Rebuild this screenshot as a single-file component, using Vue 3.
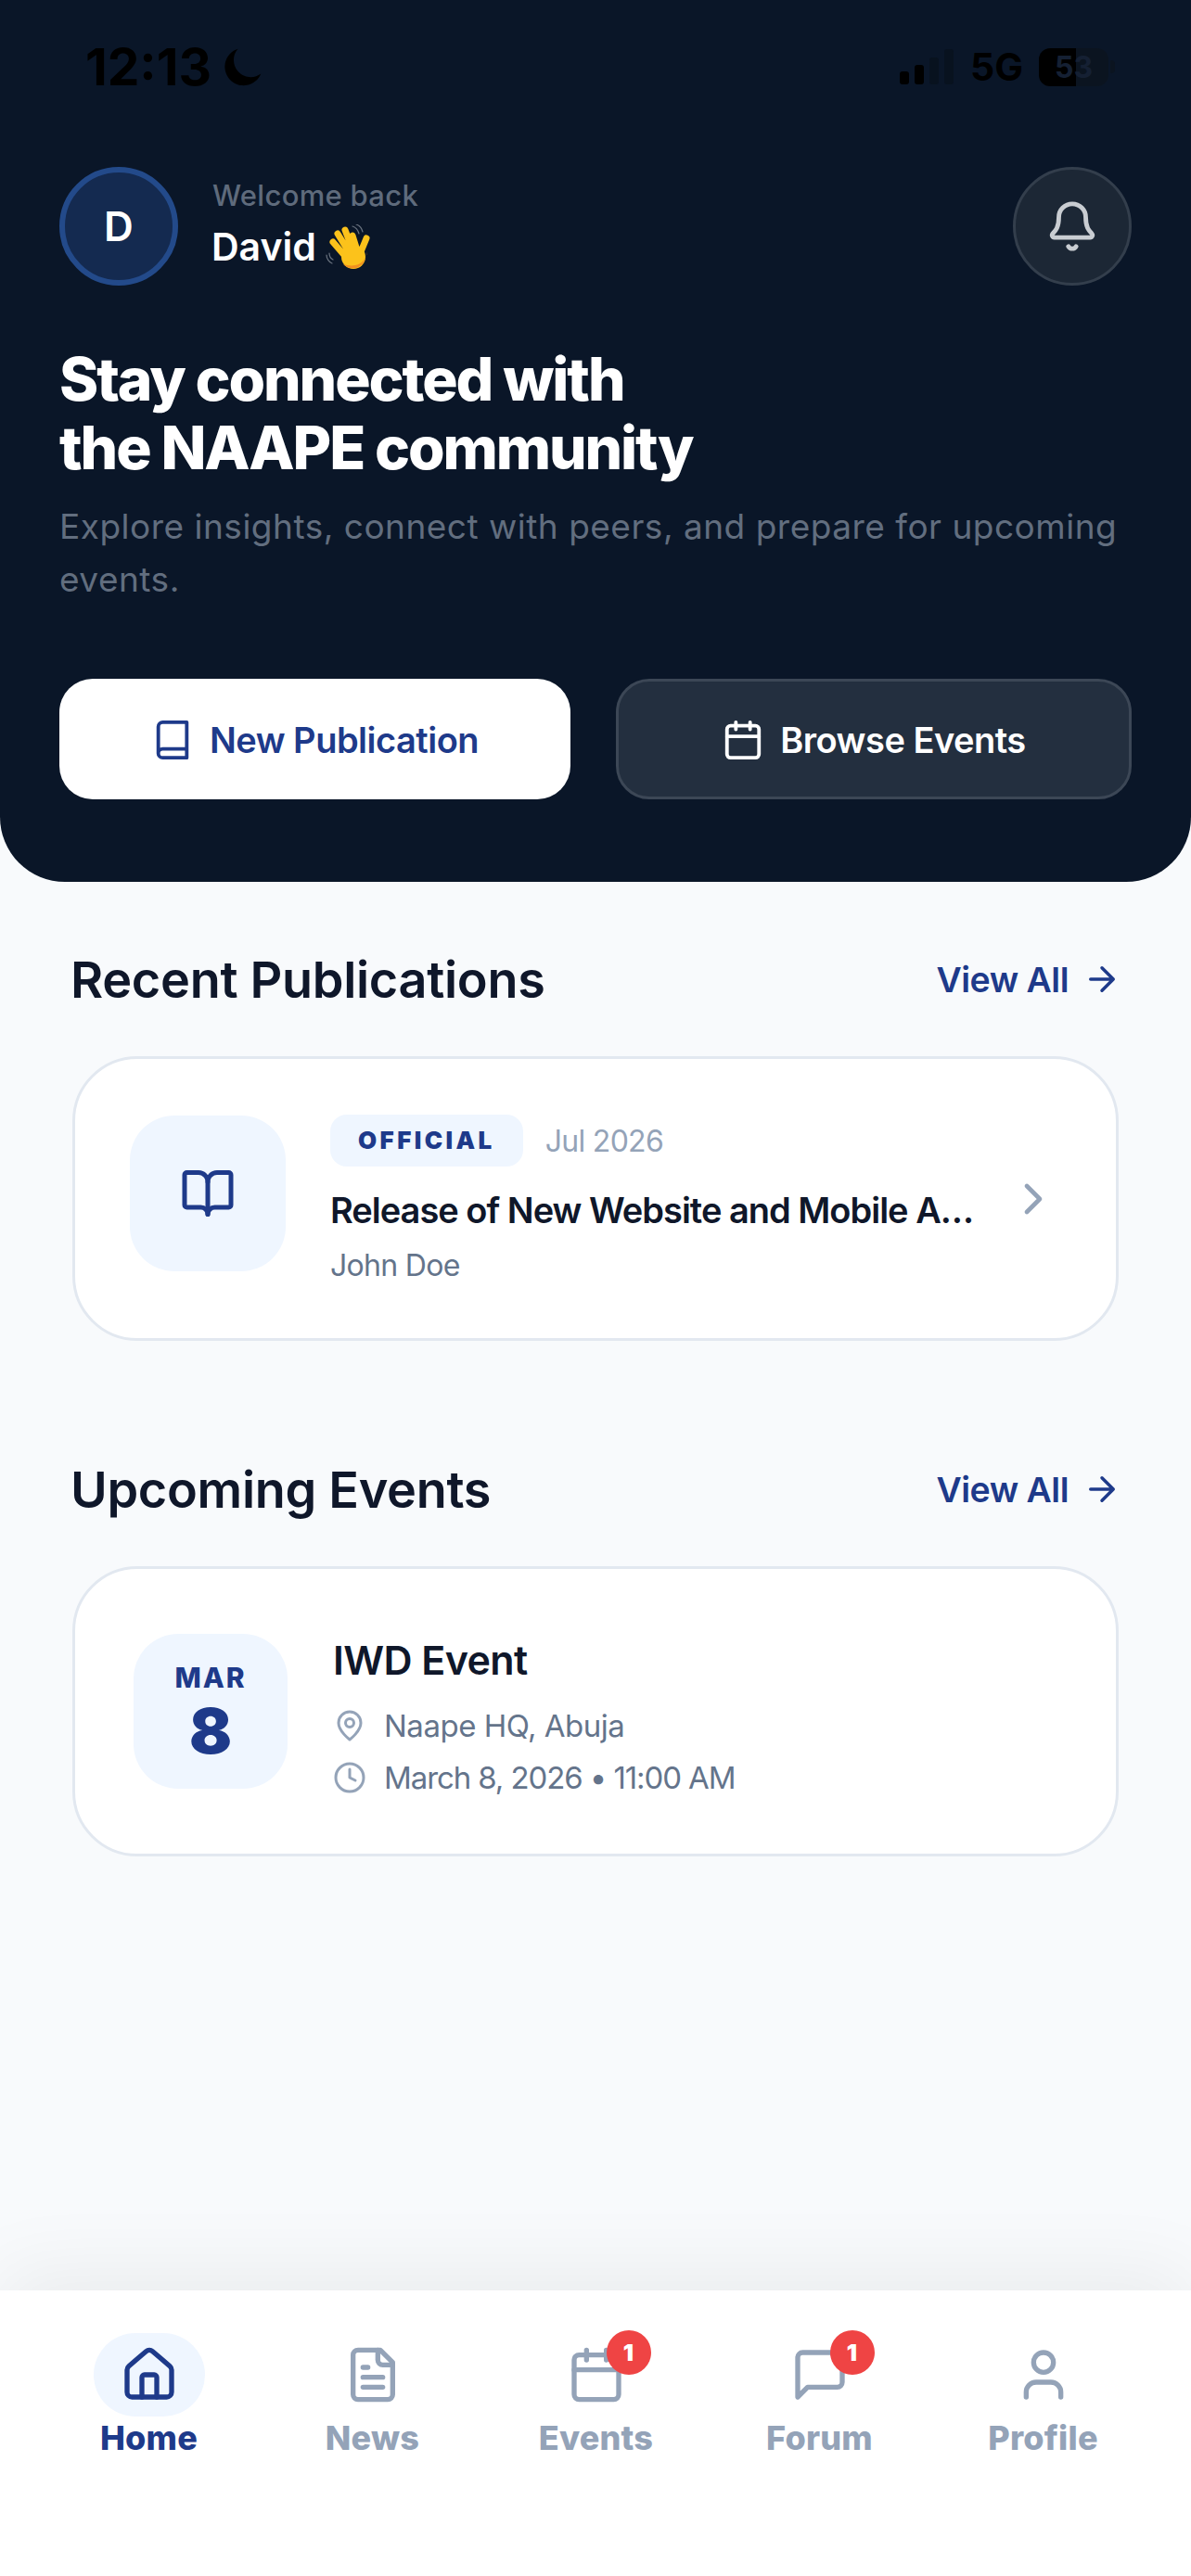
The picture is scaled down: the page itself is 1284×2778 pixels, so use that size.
<script setup>
const navItems = [
  { label: 'Home', active: true },
  { label: 'News' },
  { label: 'Events', badge: 1 },
  { label: 'Forum', badge: 1 },
  { label: 'Profile' },
]
</script>

<template>
  <div class="page">
    <header class="hero">
      <div class="status">
        <div class="status-left">
          <span class="clock">12:13</span>
          <svg class="moon" viewBox="0 0 24 24"><path d="M9 1.5a11 11 0 1 0 13.5 14.6A10 10 0 0 1 9 1.5z" fill="#000" /></svg>
        </div>
        <div class="status-right">
          <div class="signal"><i class="on s1"></i><i class="on s2"></i><i class="s3"></i><i class="s4"></i></div>
          <span class="net">5G</span>
          <div class="battery"><span>53</span></div>
          <div class="nub"></div>
        </div>
      </div>

      <div class="top-row">
        <div class="user">
          <div class="avatar">D</div>
          <div class="user-text">
            <div class="welcome">Welcome back</div>
            <div class="name">David
              <svg class="wave" viewBox="0 0 49 49">
                <path d="M29 2c3 1 6 4 7 8M33 0c3 1 6 4 7 8M1 33c0 4 3 8 6 9M4 31c0 3 2 6 4 7" stroke="#6b7480" stroke-width="1.2" stroke-linecap="round" fill="none" />
                <g stroke="#fcc21b" stroke-width="7" stroke-linecap="round" fill="none">
                  <path d="M20 33 8 19M24 28 13 10M29 27 21 6M34 28 29 12M37 32 44 15" />
                </g>
                <circle cx="30" cy="35" r="13" fill="#fcc21b" />
                <path d="M19 43c6 6 17 6 22-2 2-4 3-8 4-12-1 9-7 14-13 15-5 1-9 0-13-1z" fill="#f19020" />
              </svg>
            </div>
          </div>
        </div>
        <button class="bell">
          <svg viewBox="0 0 24 24" fill="none" stroke="#c9cdd2" stroke-width="2" stroke-linecap="round" stroke-linejoin="round"><path d="M10.268 21a2 2 0 0 0 3.464 0" /><path d="M3.262 15.326A1 1 0 0 0 4 17h16a1 1 0 0 0 .74-1.673C19.41 13.956 18 12.499 18 8A6 6 0 0 0 6 8c0 4.499-1.411 5.956-2.738 7.326" /></svg>
        </button>
      </div>

      <h1>Stay connected with<br />the NAAPE community</h1>
      <p class="sub">Explore insights, connect with peers, and prepare for upcoming events.</p>

      <div class="actions">
        <button class="btn btn-light">
          <svg viewBox="0 0 24 24" fill="none" stroke="#1e3a8a" stroke-width="2" stroke-linecap="round" stroke-linejoin="round"><path d="M4 19.5v-15A2.5 2.5 0 0 1 6.5 2H20v20H6.5a2.5 2.5 0 0 1 0-5H20" /></svg>
          New Publication
        </button>
        <button class="btn btn-dark">
          <svg viewBox="0 0 24 24" fill="none" stroke="#fff" stroke-width="2" stroke-linecap="round" stroke-linejoin="round"><rect x="3" y="4" width="18" height="18" rx="2" /><path d="M16 2v4M8 2v4M3 10h18" /></svg>
          Browse Events
        </button>
      </div>
    </header>

    <main class="content">
      <section class="section">
        <div class="section-head">
          <h2>Recent Publications</h2>
          <a class="view-all">View All
            <svg viewBox="0 0 24 24" fill="none" stroke="#1e3a8a" stroke-width="2" stroke-linecap="round" stroke-linejoin="round"><path d="M5 12h14M12 5l7 7-7 7" /></svg>
          </a>
        </div>
        <div class="card pub-card">
          <div class="pub-icon">
            <svg viewBox="0 0 24 24" fill="none" stroke="#1e3a8a" stroke-width="2" stroke-linecap="round" stroke-linejoin="round"><path d="M12 7v14" /><path d="M3 18a1 1 0 0 1-1-1V4a1 1 0 0 1 1-1h5a4 4 0 0 1 4 4 4 4 0 0 1 4-4h5a1 1 0 0 1 1 1v13a1 1 0 0 1-1 1h-6a3 3 0 0 0-3 3 3 3 0 0 0-3-3z" /></svg>
          </div>
          <div class="pub-body">
            <div class="pub-meta">
              <span class="tag">OFFICIAL</span>
              <span class="pub-date">Jul 2026</span>
            </div>
            <div class="pub-title">Release of New Website and Mobile App for NAAPE</div>
            <div class="pub-author">John Doe</div>
          </div>
          <svg class="chevron" viewBox="0 0 24 24" fill="none" stroke="#94a3b8" stroke-width="2" stroke-linecap="round" stroke-linejoin="round"><path d="M9 18l6-6-6-6" /></svg>
        </div>
      </section>

      <section class="section events">
        <div class="section-head">
          <h2>Upcoming Events</h2>
          <a class="view-all">View All
            <svg viewBox="0 0 24 24" fill="none" stroke="#1e3a8a" stroke-width="2" stroke-linecap="round" stroke-linejoin="round"><path d="M5 12h14M12 5l7 7-7 7" /></svg>
          </a>
        </div>
        <div class="card event-card">
          <div class="date-box">
            <span class="month">MAR</span>
            <span class="day">8</span>
          </div>
          <div class="event-body">
            <div class="event-title">IWD Event</div>
            <div class="event-line">
              <svg viewBox="0 0 24 24" fill="none" stroke="#94a3b8" stroke-width="2" stroke-linecap="round" stroke-linejoin="round"><path d="M20 10c0 6-8 12-8 12s-8-6-8-12a8 8 0 0 1 16 0z" /><circle cx="12" cy="10" r="3" /></svg>
              Naape HQ, Abuja
            </div>
            <div class="event-line time">
              <svg viewBox="0 0 24 24" fill="none" stroke="#94a3b8" stroke-width="2" stroke-linecap="round" stroke-linejoin="round"><circle cx="12" cy="12" r="10" /><path d="M12 6v6l4 2" /></svg>
              March 8, 2026 • 11:00 AM
            </div>
          </div>
        </div>
      </section>
    </main>

    <nav class="tabbar">
      <div v-for="item in navItems" :key="item.label" class="tab" :class="{ active: item.active }">
        <div class="tab-icon">
          <svg v-if="item.label === 'Home'" viewBox="0 0 24 24"><path d="M3 10a2 2 0 0 1 .7-1.5l7-6a2 2 0 0 1 2.6 0l7 6A2 2 0 0 1 21 10v9a2 2 0 0 1-2 2H5a2 2 0 0 1-2-2z" /><path d="M15 21v-8a1 1 0 0 0-1-1h-4a1 1 0 0 0-1 1v8" /></svg>
          <svg v-if="item.label === 'News'" viewBox="0 0 24 24"><path d="M15 2H6a2 2 0 0 0-2 2v16a2 2 0 0 0 2 2h12a2 2 0 0 0 2-2V7z" /><path d="M14 2v4a2 2 0 0 0 2 2h4M10 9H8M16 13H8M16 17H8" /></svg>
          <svg v-if="item.label === 'Events'" viewBox="0 0 24 24"><rect x="3" y="4" width="18" height="18" rx="2" /><path d="M16 2v4M8 2v4M3 10h18" /></svg>
          <svg v-if="item.label === 'Forum'" viewBox="0 0 24 24"><path d="M21 15a2 2 0 0 1-2 2H7l-4 4V5a2 2 0 0 1 2-2h14a2 2 0 0 1 2 2z" /></svg>
          <svg v-if="item.label === 'Profile'" viewBox="0 0 24 24"><path d="M19 21v-2a4 4 0 0 0-4-4H9a4 4 0 0 0-4 4v2" /><circle cx="12" cy="7" r="4" /></svg>
          <span v-if="item.badge" class="badge">{{ item.badge }}</span>
        </div>
        <span class="tab-label">{{ item.label }}</span>
      </div>
    </nav>
  </div>
</template>

<style>
body {
  background: #f8fafc;
}
</style>

<style scoped>
.page {
  height: 2778px;
  display: flex;
  flex-direction: column;
  background: #f8fafc;
  font-family: Inter, "Liberation Sans", sans-serif;
  overflow: hidden;
}

.hero {
  height: 951px;
  box-sizing: border-box;
  padding: 0 64px;
  background: #0a1628;
  border-radius: 0 0 70px 70px;
}

.status {
  height: 180px;
  box-sizing: border-box;
  padding: 48px 18px 0 28px;
  display: flex;
  justify-content: space-between;
  align-items: flex-start;
}

.status-left,
.status-right {
  display: flex;
  align-items: center;
  height: 48px;
}

.clock {
  font-size: 55px;
  font-weight: 700;
  color: #000;
}

.moon {
  width: 44px;
  height: 44px;
  margin-left: 12px;
}

.signal {
  display: flex;
  align-items: flex-end;
  gap: 6px;
  height: 38px;
  margin-right: 18px;
}

.signal i {
  width: 10px;
  border-radius: 3px;
  background: #08121f;
}

.signal .on {
  background: #000;
}

.s1 { height: 14px; }
.s2 { height: 21px; }
.s3 { height: 29px; }
.s4 { height: 38px; }

.net {
  font-size: 41px;
  font-weight: 700;
  color: #000;
  margin-right: 17px;
}

.battery {
  width: 75px;
  height: 41px;
  border-radius: 12px;
  background: linear-gradient(90deg, #000 53%, #0b1420 53%);
  text-align: center;
  font-size: 32px;
  font-weight: 700;
  line-height: 41px;
}

.battery span {
  color: #152033;
}

.nub {
  width: 5px;
  height: 14px;
  margin-left: 2px;
  border-radius: 0 4px 4px 0;
  background: #0b1420;
}

.top-row {
  display: flex;
  justify-content: space-between;
  align-items: center;
}

.user {
  display: flex;
  align-items: center;
  gap: 36px;
}

.user-text {
  margin-bottom: 7px;
}

.avatar {
  width: 128px;
  height: 128px;
  box-sizing: border-box;
  border: 6px solid #234a8a;
  border-radius: 50%;
  background: #142a50;
  color: #fff;
  font-size: 44px;
  font-weight: 600;
  display: flex;
  align-items: center;
  justify-content: center;
}

.welcome {
  margin-left: 1px;
  font-size: 31px;
  font-weight: 500;
  line-height: 42px;
  color: #5f6b7c;
  letter-spacing: 0.3px;
}

.name {
  display: flex;
  align-items: center;
  gap: 10px;
  margin-top: 9px;
  font-size: 41px;
  font-weight: 600;
  line-height: 50px;
  color: #fff;
}

.wave {
  width: 49px;
  height: 49px;
}

.bell {
  width: 128px;
  height: 128px;
  box-sizing: border-box;
  padding: 0;
  border: 3px solid #333e4c;
  border-radius: 50%;
  background: #1c2735;
  display: flex;
  align-items: center;
  justify-content: center;
}

.bell svg {
  width: 58px;
  height: 58px;
}

h1 {
  margin: 64px 0 0;
  font-size: 64px;
  font-weight: 800;
  line-height: 74px;
  letter-spacing: -2.1px;
  color: #fff;
}

.sub {
  margin: 19px 0 0;
  font-size: 37px;
  line-height: 57px;
  color: #626e7f;
  letter-spacing: 0.5px;
}

.actions {
  display: flex;
  gap: 49px;
  margin-top: 79px;
}

.btn {
  height: 130px;
  box-sizing: border-box;
  padding: 2px 0 0;
  border-radius: 36px;
  display: flex;
  align-items: center;
  justify-content: center;
  gap: 17px;
  font-family: inherit;
  font-size: 38px;
  font-weight: 600;
  letter-spacing: -0.5px;
}

.btn svg {
  width: 46px;
  height: 46px;
}

.btn-light {
  width: 551px;
  border: 0;
  background: #fff;
  color: #1e3a8a;
}

.btn-dark {
  width: 556px;
  border: 3px solid #3c4756;
  background: #232f3f;
  color: #fff;
}

.content {
  flex: 1;
  padding: 0 78px;
}

.section {
  padding-top: 69px;
}

.events {
  padding-top: 124px;
}

.section-head {
  height: 72px;
  display: flex;
  justify-content: space-between;
  align-items: center;
  margin-bottom: 47px;
}

h2 {
  margin: 0 0 0 -2px;
  font-size: 54px;
  font-weight: 600;
  letter-spacing: -0.3px;
  color: #0f172a;
}

.view-all {
  display: flex;
  align-items: center;
  gap: 15px;
  margin-right: -3px;
  font-size: 37.5px;
  font-weight: 600;
  letter-spacing: -0.5px;
  color: #1e3a8a;
}

.view-all svg {
  width: 42px;
  height: 42px;
}

.card {
  box-sizing: border-box;
  width: 1128px;
  border: 3px solid #e2e8f0;
  border-radius: 70px;
  background: #fff;
  display: flex;
  align-items: center;
}

.pub-card {
  height: 307px;
  padding: 0 40px 0 59px;
}

.pub-icon {
  width: 168px;
  height: 168px;
  flex: none;
  margin-bottom: 12px;
  border-radius: 48px;
  background: #eff6ff;
  display: flex;
  align-items: center;
  justify-content: center;
}

.pub-icon svg {
  width: 60px;
  height: 60px;
}

.pub-body {
  width: 700px;
  margin: 3px 0 0 48px;
}

.pub-meta {
  display: flex;
  align-items: center;
  gap: 24px;
}

.tag {
  height: 56px;
  padding: 0 30px;
  border-radius: 18px;
  background: #eff6ff;
  color: #1e3a8a;
  font-size: 26px;
  font-weight: 900;
  line-height: 56px;
  letter-spacing: 3.4px;
}

.pub-date {
  font-size: 32px;
  color: #94a3b8;
  letter-spacing: -0.7px;
}

.pub-title {
  margin-top: 20px;
  font-size: 38px;
  font-weight: 600;
  line-height: 54px;
  letter-spacing: -1px;
  color: #0f172a;
  white-space: nowrap;
  overflow: hidden;
  text-overflow: ellipsis;
}

.pub-author {
  margin-top: 12px;
  font-size: 32px;
  line-height: 42px;
  letter-spacing: -0.7px;
  color: #64748b;
}

.chevron {
  width: 56px;
  height: 56px;
  margin-left: 30px;
  flex: none;
}

.event-card {
  height: 313px;
  padding: 0 63px;
}

.date-box {
  width: 166px;
  height: 167px;
  flex: none;
  border-radius: 48px;
  background: #eff6ff;
  display: flex;
  flex-direction: column;
  align-items: center;
  justify-content: center;
  gap: 5px;
  color: #1e3a8a;
}

.month {
  font-size: 30px;
  font-weight: 800;
  line-height: 36px;
  letter-spacing: 2px;
}

.day {
  font-size: 68px;
  font-weight: 900;
  line-height: 68px;
}

.event-body {
  margin-left: 49px;
  padding-top: 14px;
}

.event-title {
  margin-bottom: 13px;
  font-size: 43px;
  font-weight: 600;
  line-height: 60px;
  letter-spacing: -0.6px;
  color: #0f172a;
}

.event-line {
  display: flex;
  align-items: center;
  gap: 19px;
  height: 56px;
  font-size: 33px;
  letter-spacing: -0.5px;
  color: #64748b;
}

.event-line.time {
  letter-spacing: -1.1px;
}

.event-line svg {
  width: 36px;
  height: 36px;
}

.tabbar {
  height: 308px;
  box-sizing: border-box;
  padding: 46px 40px 0;
  background: #fff;
  box-shadow: 0 -20px 80px rgba(0, 0, 0, 0.06);
  display: grid;
  grid-template-columns: repeat(5, 241px);
  align-items: start;
  position: relative;
}

.tab {
  display: flex;
  flex-direction: column;
  align-items: center;
  color: #94a3b8;
}

.tab.active {
  color: #1e3a8a;
}

.tab-icon {
  position: relative;
  width: 120px;
  height: 90px;
  border-radius: 45px;
  display: flex;
  align-items: center;
  justify-content: center;
}

.tab.active .tab-icon {
  background: #eff6ff;
}

.tab-icon svg {
  width: 64px;
  height: 64px;
  fill: none;
  stroke: currentColor;
  stroke-width: 2;
  stroke-linecap: round;
  stroke-linejoin: round;
}

.badge {
  position: absolute;
  top: -3px;
  right: 1px;
  width: 48px;
  height: 48px;
  border-radius: 50%;
  background: #ef4444;
  color: #fff;
  font-size: 25px;
  font-weight: 900;
  line-height: 48px;
  text-align: center;
}

.tab-label {
  margin-top: 1px;
  font-size: 36px;
  font-weight: 800;
  line-height: 44px;
  letter-spacing: 0.2px;
}
</style>
